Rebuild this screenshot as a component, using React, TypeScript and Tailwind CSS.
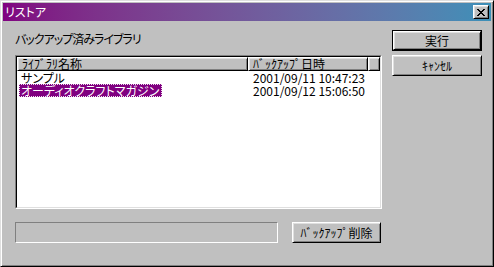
import React from 'react';

const jp = "font-['Noto_Sans_CJK_JP',sans-serif] [font-feature-settings:'palt']";
// half-width katakana keep their full 6px cell
const hw = '[font-feature-settings:normal]';

const raised =
  'border border-t-white border-l-white border-r-black border-b-black shadow-[inset_1px_1px_#dfdfdf,inset_-1px_-1px_#808080]';

function Button({ label, isDefault, half }: { label: string; isDefault?: boolean; half?: boolean }) {
  const face = (
    <div
      className={`${raised} ${half ? hw : ''} flex h-full w-full items-center justify-center bg-[#c0c0c0] text-[12px] leading-none text-black`}
    >
      {label}
    </div>
  );
  if (isDefault) {
    return <div className="h-[21px] w-[90px] border border-black">{face}</div>;
  }
  return <div className="h-[21px] w-[90px]">{face}</div>;
}

const rows = [
  { name: 'サンプル', date: '2001/09/11 10:47:23', selected: false },
  { name: 'オーディオクラフトマガジン', date: '2001/09/12 15:06:50', selected: true },
];

export default function App() {
  return (
    <div
      className={`${jp} flex h-[267px] w-[494px] flex-col border border-t-[#dfdfdf] border-l-[#dfdfdf] border-r-black border-b-black bg-[#c0c0c0] p-[2px] shadow-[inset_1px_1px_#fff,inset_-1px_-1px_#808080]`}
    >
      {/* title bar */}
      <div className="flex h-[18px] items-center justify-between bg-gradient-to-r from-[#800080] to-[#3c90b8] pl-[2px] pr-[2px]">
        <span className="text-[12px] leading-none text-white">リストア</span>
        <div className={`${raised} flex h-[14px] w-[16px] items-center justify-center bg-[#c0c0c0]`}>
          <svg width="8" height="7" viewBox="0 0 8 7" shapeRendering="crispEdges">
            <path
              d="M0 0h2v1H0zM6 0h2v1H6zM1 1h2v1H1zM5 1h2v1H5zM2 2h4v1H2zM3 3h2v1H3zM2 4h4v1H2zM1 5h2v1H1zM5 5h2v1H5zM0 6h2v1H0zM6 6h2v1H6z"
              fill="#000"
            />
          </svg>
        </div>
      </div>

      {/* body */}
      <div className="flex flex-1 pl-[12px]">
        <div className="flex w-[367px] flex-col">
          <div className="mt-[10px] h-[16px] text-[12px] leading-[16px] tracking-[-1px] text-black">
            バックアップ済みライブラリ
          </div>

          <div className="mt-[8px] h-[154px] border border-t-[#808080] border-l-[#808080] border-r-white border-b-white">
            <div className="flex h-full flex-col border border-t-black border-l-black border-r-[#dfdfdf] border-b-[#dfdfdf] bg-white">
              <div className={`${hw} flex h-[14px] text-[12px] leading-none text-black`}>
                <div className={`${raised} flex w-[231px] items-center bg-[#c0c0c0] pl-[4px]`}>ﾗｲﾌﾞﾗﾘ名称</div>
                <div className={`${raised} flex w-[120px] items-center bg-[#c0c0c0] pl-[4px]`}>ﾊﾞｯｸｱｯﾌﾟ日時</div>
                <div className={`${raised} flex-1 bg-[#c0c0c0]`} />
              </div>
              {rows.map((r) => (
                <div key={r.name} className="flex h-[13px] text-[12px] leading-[13px] text-black">
                  <div className="w-[231px] pl-[2px]">
                    {r.selected ? (
                      <span className="inline-block h-[13px] border border-dotted border-[#f0e0f0] bg-[#800080] pl-[1px] pr-[2px] leading-[11px] text-white">
                        {r.name}
                      </span>
                    ) : (
                      <span className="pl-[2px]">{r.name}</span>
                    )}
                  </div>
                  <div className="w-[120px] pl-[5px]">{r.date}</div>
                </div>
              ))}
            </div>
          </div>

          <div className="mt-[13px] flex h-[21px]">
            <div className="h-[21px] w-[263px] border border-t-[#808080] border-l-[#808080] border-r-white border-b-white" />
            <div className="ml-[14px] h-[21px] w-[89px]">
              <div
                className={`${raised} ${hw} flex h-full w-full items-center justify-center bg-[#c0c0c0] text-[12px] leading-none text-black`}
              >
                ﾊﾞｯｸｱｯﾌﾟ削除
              </div>
            </div>
          </div>
        </div>

        <div className="ml-[10px] mt-[9px] flex flex-col gap-[4px]">
          <Button label="実行" isDefault />
          <Button label="ｷｬﾝｾﾙ" half />
        </div>
      </div>
    </div>
  );
}
